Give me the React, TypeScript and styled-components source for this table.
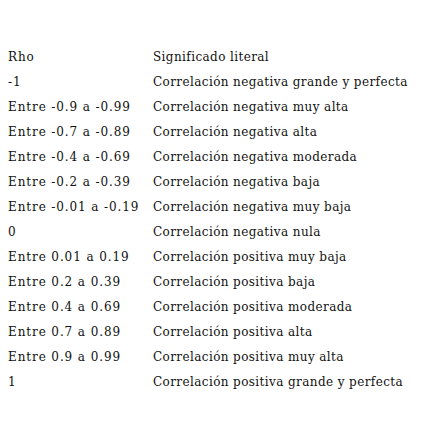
import React from "react";
import styled, { createGlobalStyle } from "styled-components";

const GlobalStyle = createGlobalStyle`
  html, body { margin: 0; padding: 0; background: #ffffff; }
  body { font-family: "DejaVu Serif", "Liberation Serif", serif; color: #000; }
`;

const Page = styled.div`
  padding: 45px 8px 20px 8px;
`;

const Table = styled.table`
  border-collapse: collapse;
  font-size: 12px;
  font-family: "DejaVu Serif", serif;
  color: #111;
`;

const Row = styled.tr`
  height: 25px;
`;

const Cell = styled.td<{ $first?: boolean }>`
  padding: 0;
  width: ${(p) => (p.$first ? "145px" : "auto")};
  letter-spacing: ${(p) => (p.$first ? "0.9px" : "0.4px")};
  white-space: nowrap;
  vertical-align: middle;
  line-height: 25px;
`;

const rows: [string, string][] = [
  ["Rho", "Significado literal"],
  ["-1", "Correlación negativa grande y perfecta"],
  ["Entre -0.9 a -0.99", "Correlación negativa muy alta"],
  ["Entre -0.7 a -0.89", "Correlación negativa alta"],
  ["Entre -0.4 a -0.69", "Correlación negativa moderada"],
  ["Entre -0.2 a -0.39", "Correlación negativa baja"],
  ["Entre -0.01 a -0.19", "Correlación negativa muy baja"],
  ["0", "Correlación negativa nula"],
  ["Entre 0.01 a 0.19", "Correlación positiva muy baja"],
  ["Entre 0.2 a 0.39", "Correlación positiva baja"],
  ["Entre 0.4 a 0.69", "Correlación positiva moderada"],
  ["Entre 0.7 a 0.89", "Correlación positiva alta"],
  ["Entre 0.9 a 0.99", "Correlación positiva muy alta"],
  ["1", "Correlación positiva grande y perfecta"],
];

export default function App() {
  return (
    <>
      <GlobalStyle />
      <Page>
        <Table>
          <tbody>
            {rows.map(([a, b]) => (
              <Row key={a}>
                <Cell $first>{a}</Cell>
                <Cell>{b}</Cell>
              </Row>
            ))}
          </tbody>
        </Table>
      </Page>
    </>
  );
}
